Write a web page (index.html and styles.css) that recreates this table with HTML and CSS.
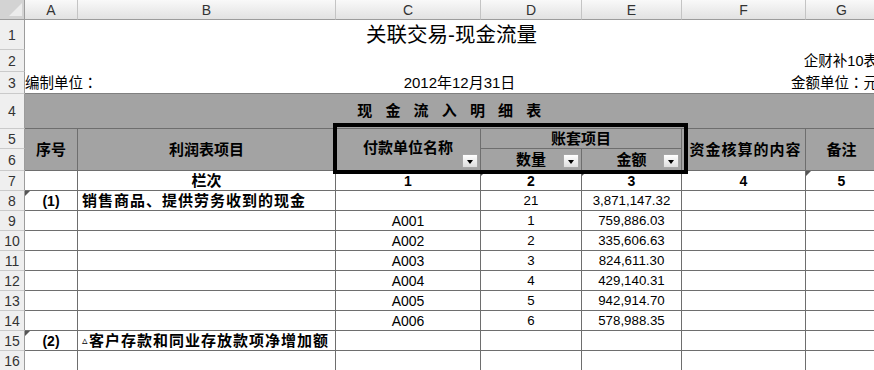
FILE: index.html
```html
<!DOCTYPE html>
<html lang="zh-CN">
<head>
<meta charset="utf-8">
<title>关联交易-现金流量</title>
<link rel="stylesheet" href="styles.css">
</head>
<body>
<div class="stage">
<table class="sheet">
<colgroup>
<col class="w-rh"><col class="w-a"><col class="w-b"><col class="w-c"><col class="w-d"><col class="w-e"><col class="w-f"><col class="w-g">
</colgroup>
<thead>
<tr class="r-colhdr">
<th class="corner"><svg class="corner-tri" width="25" height="19" viewBox="0 0 25 19"><polygon points="22,3 22,16 9,16" fill="#ececec"/></svg></th>
<th class="ch">A</th><th class="ch">B</th><th class="ch">C</th><th class="ch">D</th><th class="ch">E</th><th class="ch">F</th><th class="ch">G</th>
</tr>
</thead>
<tbody>
<tr class="r-30"><th class="rh">1</th><td colspan="7" class="plain title">关联交易-现金流量</td></tr>
<tr class="r-22"><th class="rh">2</th><td colspan="7" class="plain end">企财补10表</td></tr>
<tr class="r-22"><th class="rh">3</th><td colspan="7" class="plain last"><div class="meta"><span>编制单位<span class="colon" lang="ja">：</span></span><span class="meta-mid">2012年12月31日</span><span class="meta-end">金额单位<span class="colon" lang="ja">：</span>元</span></div></td></tr>
<tr class="r-35"><th class="rh">4</th><td colspan="7" class="band">现 金 流 入 明 细 表</td></tr>
<tr class="r-20"><th class="rh">5</th>
<td rowspan="2" class="hd">序号</td>
<td rowspan="2" class="hd">利润表项目</td>
<td rowspan="2" class="hd pin"><span class="hd-shift">付款单位名称</span><span class="dd"></span></td>
<td colspan="2" class="hd">账套项目</td>
<td rowspan="2" class="hd wide">资金核算的内容</td>
<td rowspan="2" class="hd">备注</td>
</tr>
<tr class="r-22"><th class="rh">6</th>
<td class="hd pin">数量<span class="dd"></span></td>
<td class="hd pin">金额<span class="dd"></span></td>
</tr>
<tr class="r-20"><th class="rh">7</th>
<td class="c"></td><td class="c hb">栏次</td><td class="c nb">1</td><td class="c nb pin mk">2</td><td class="c nb pin mk">3</td><td class="c nb">4</td><td class="c nb pin mk">5</td>
</tr>
<tr class="r-20"><th class="rh">8</th>
<td class="c nb pin mk">(1)</td><td class="c lb">销售商品、提供劳务收到的现金</td><td class="c"></td><td class="c">21</td><td class="c">3,871,147.32</td><td class="c"></td><td class="c"></td>
</tr>
<tr class="r-20"><th class="rh">9</th><td class="c"></td><td class="c"></td><td class="c code">A001</td><td class="c">1</td><td class="c">759,886.03</td><td class="c"></td><td class="c"></td></tr>
<tr class="r-20"><th class="rh">10</th><td class="c"></td><td class="c"></td><td class="c code">A002</td><td class="c">2</td><td class="c">335,606.63</td><td class="c"></td><td class="c"></td></tr>
<tr class="r-20"><th class="rh">11</th><td class="c"></td><td class="c"></td><td class="c code">A003</td><td class="c">3</td><td class="c">824,611.30</td><td class="c"></td><td class="c"></td></tr>
<tr class="r-20"><th class="rh">12</th><td class="c"></td><td class="c"></td><td class="c code">A004</td><td class="c">4</td><td class="c">429,140.31</td><td class="c"></td><td class="c"></td></tr>
<tr class="r-20"><th class="rh">13</th><td class="c"></td><td class="c"></td><td class="c code">A005</td><td class="c">5</td><td class="c">942,914.70</td><td class="c"></td><td class="c"></td></tr>
<tr class="r-20"><th class="rh">14</th><td class="c"></td><td class="c"></td><td class="c code">A006</td><td class="c">6</td><td class="c">578,988.35</td><td class="c"></td><td class="c"></td></tr>
<tr class="r-20"><th class="rh">15</th>
<td class="c nb pin mk">(2)</td><td class="c lb"><span class="delta">▵</span>客户存款和同业存放款项净增加额</td><td class="c"></td><td class="c"></td><td class="c"></td><td class="c"></td><td class="c"></td>
</tr>
<tr class="r-20"><th class="rh">16</th><td class="c"></td><td class="c"></td><td class="c"></td><td class="c"></td><td class="c"></td><td class="c"></td><td class="c"></td></tr>
</tbody>
</table>
<div class="annot"></div>
</div>
</body>
</html>
```
FILE: styles.css
```css
* { box-sizing: border-box; }
html, body { margin: 0; padding: 0; }
body {
  width: 874px;
  height: 370px;
  overflow: hidden;
  background: #fff;
  font-family: "Liberation Sans", "Noto Sans CJK SC", sans-serif;
  color: #000;
}
.stage { position: relative; width: 874px; height: 370px; overflow: hidden; }

.sheet {
  border-collapse: separate;
  border-spacing: 0;
  table-layout: fixed;
  width: 878px;
}
.sheet th, .sheet td {
  padding: 0;
  line-height: 16px;
  white-space: nowrap;
  overflow: visible;
  vertical-align: middle;
}

.w-rh { width: 25px; }
.w-a { width: 53px; }
.w-b { width: 258px; }
.w-c { width: 145px; }
.w-d { width: 101px; }
.w-e { width: 100px; }
.w-f { width: 124px; }
.w-g { width: 72px; }

.r-colhdr { height: 19px; }
.r-30 { height: 30px; }
.r-22 { height: 22px; }
.r-35 { height: 35px; }
.r-20 { height: 20px; }

.corner {
  background: #d3d3d3;
  border-right: 1px solid #9c9c9c;
  border-bottom: 1px solid #9c9c9c;
}
.corner-tri { display: block; }
.ch {
  background: linear-gradient(#f9f9f9, #e2e2e2);
  border-right: 1px solid #c4c4c4;
  border-bottom: 1px solid #9c9c9c;
  font-weight: normal;
  font-size: 14px;
  color: #333;
  text-align: center;
}
.rh {
  background: #efefef;
  border-right: 1px solid #9c9c9c;
  border-bottom: 1px solid #cacaca;
  font-weight: normal;
  font-size: 14px;
  color: #333;
  text-align: center;
  padding-right: 12px;
}

.plain { font-size: 14.5px; padding: 0 2px 0 3px; }
.plain.last { border-bottom: 1px solid #808080; }
.title { font-size: 20.5px; line-height: 24px; text-align: center; padding-left: 12px; }
.end { text-align: right; }
.meta {
  display: grid;
  grid-template-columns: 1fr auto 1fr;
  align-items: center;
}
.meta-mid { margin-left: 16px; font-size: 15px; }
.meta-end { justify-self: end; }
.colon { font-family: "Noto Sans CJK JP", "Noto Sans CJK TC", sans-serif; }

.band {
  background: #a3a3a3;
  border-bottom: 1px solid #6e6e6e;
  font-size: 15px;
  font-weight: bold;
  letter-spacing: 4.5px;
  text-align: center;
  padding-left: 12px;
}
.hd {
  background: #a3a3a3;
  border-right: 1px solid #6e6e6e;
  border-bottom: 1px solid #6e6e6e;
  font-size: 15px;
  font-weight: bold;
  text-align: center;
}
.hd.wide { letter-spacing: 1px; padding-left: 4px; }
.hd-shift { position: relative; top: -2px; }

.c {
  border-right: 1px solid #6e6e6e;
  border-bottom: 1px solid #6e6e6e;
  font-size: 13.3px;
  text-align: center;
}
.c.code { font-size: 14px; }
.c.nb { font-size: 14px; font-weight: bold; }
.c.hb { font-size: 15px; font-weight: bold; }
.c.lb {
  font-size: 15px;
  font-weight: bold;
  letter-spacing: 1px;
  text-align: left;
  padding-left: 4px;
}
.delta { font-size: 11px; font-weight: normal; letter-spacing: 0; vertical-align: 2px; margin-right: 1px; }

.pin { position: relative; }
.dd {
  position: absolute;
  right: 2px;
  bottom: 2px;
  width: 16px;
  height: 14px;
  border: 1px solid #a8a8a8;
  border-radius: 1px;
  background: linear-gradient(#ffffff, #dedede);
}
.dd::after {
  content: "";
  position: absolute;
  left: 4px;
  top: 5px;
  border-left: 3.5px solid transparent;
  border-right: 3.5px solid transparent;
  border-top: 4px solid #000;
}
.mk::before {
  content: "";
  position: absolute;
  left: 0;
  top: 0;
  border-top: 5px solid #555;
  border-right: 5px solid transparent;
}

.annot {
  position: absolute;
  left: 333px;
  top: 123px;
  width: 355px;
  height: 51px;
  border: 4px solid #000;
}
```
